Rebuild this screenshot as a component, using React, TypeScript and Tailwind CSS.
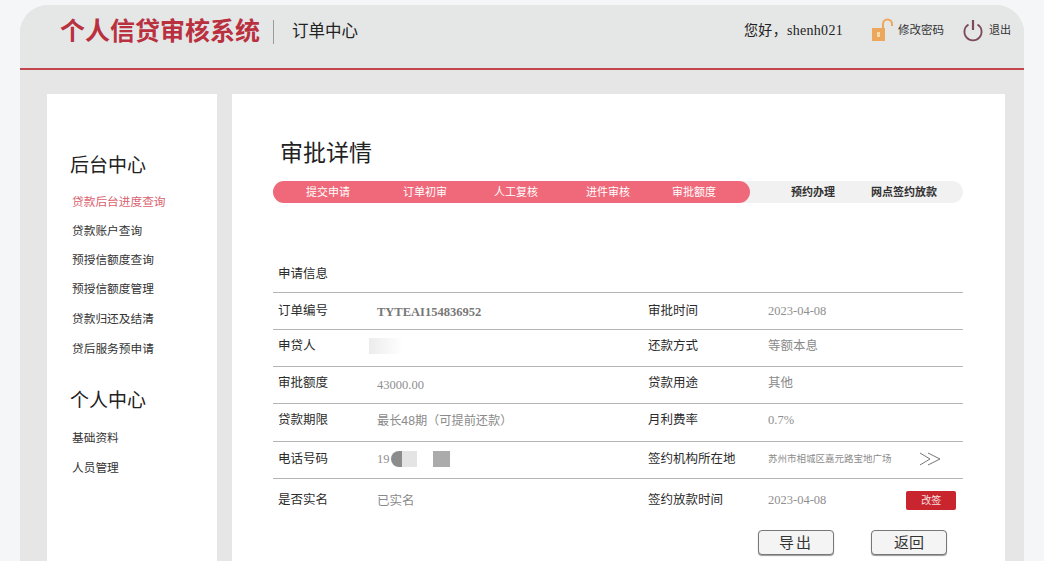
const sans = `font-['Liberation_Sans','Noto_Sans_CJK_SC',sans-serif]`;

const menuTop = ["贷款账户查询", "预授信额度查询", "预授信额度管理", "贷款归还及结清", "贷后服务预申请"];
const doneSteps = ["提交申请", "订单初审", "人工复核", "进件审核", "审批额度"];

function LockIcon() {
  return (
    <svg width="24" height="24" viewBox="0 0 24 24" className="mr-[3px] mt-[-4px]">
      <rect x="1" y="10" width="13" height="13" fill="#eda75c" />
      <rect x="6" y="14" width="3" height="5" fill="#f8d9a8" />
      <path d="M12 10V6a4.5 4.5 0 0 1 9 0V8" fill="none" stroke="#eda75c" strokeWidth="2" />
    </svg>
  );
}

function PowerIcon() {
  return (
    <svg width="22" height="24" viewBox="0 0 22 24" className="mr-[5px] mt-[-4px]">
      <path d="M6.5 6.5a8.6 8.6 0 1 0 9 0" fill="none" stroke="#7d4a5c" strokeWidth="1.8" />
      <path d="M11 2v10" stroke="#7d4a5c" strokeWidth="2.2" />
    </svg>
  );
}

function Row({ label, value, label2, value2, h, pad = "", border = true }: any) {
  return (
    <div className={`flex items-center ${h} ${pad} ${border ? "border-b border-[#b5b5b5]" : ""}`}>
      <div className="w-[104px] pl-[5px] text-[12.5px] text-[#2b2b2b]">{label}</div>
      <div className="relative w-[271px]">{value}</div>
      <div className="w-[115px] whitespace-nowrap text-[12.5px] text-[#2b2b2b]">{label2}</div>
      <div className="relative ml-[5px] flex flex-1 items-center">{value2}</div>
    </div>
  );
}

const grayText = "text-[12.5px] text-[#8a8a8a]";
const numText = `font-['Liberation_Serif','Noto_Sans_CJK_SC',serif] text-[12.5px] text-[#8f8f8f]`;

export default function App() {
  return (
    <div className={`h-[561px] w-[1044px] overflow-hidden bg-[#f5f6f8] pl-[20px] pt-[5px] ${sans}`}>
      <div className="h-[600px] w-[1004px] rounded-t-[28px] bg-[#e6e6e6]">
        <header className="flex h-[65px] items-center rounded-t-[28px] border-b-2 border-[#c2464e] bg-[#e5e6e6] pb-[10px] pl-[40px] pr-[13px]">
          <div className="text-[25px] font-bold leading-none text-[#b9313f]">个人信贷审核系统</div>
          <div className="ml-[13px] mr-[13px] h-[24px] w-px bg-[#9b9b9b]" />
          <div className="ml-[5px] text-[16.5px] text-[#222]">订单中心</div>
          <div className="ml-auto flex items-center">
            <div className="mr-[28px] mt-[-2px] font-['Liberation_Serif','Noto_Sans_CJK_SC',serif] text-[14px] tracking-[0.3px] text-[#222]">您好，shenh021</div>
            <LockIcon />
            <span className="mr-[18px] mt-[-2px] text-[11.5px] text-[#333]">修改密码</span>
            <PowerIcon />
            <span className="mt-[-2px] text-[11px] text-[#333]">退出</span>
          </div>
        </header>

        <div className="flex pl-[27px] pt-[24px]">
          <aside className="h-[480px] w-[170px] bg-white pl-[23px] pt-[59px]">
            <h2 className="text-[19px] leading-[26px] text-[#222]">后台中心</h2>
            <div className="mt-[15px] pl-[2px] text-[11.7px] leading-[16px]">
              <div className="text-[#d9626f]">贷款后台进度查询</div>
              {menuTop.map((m, i) => (
                <div key={m} className={`text-[#333] ${i >= 3 ? "mt-[14px]" : "mt-[13px]"}`}>{m}</div>
              ))}
            </div>
            <h2 className="mt-[31px] text-[19px] leading-[26px] text-[#222]">个人中心</h2>
            <div className="mt-[16px] pl-[2px] text-[11.7px] leading-[16px] text-[#333]">
              <div>基础资料</div>
              <div className="mt-[14px]">人员管理</div>
            </div>
          </aside>

          <main className="ml-[15px] h-[480px] w-[773px] bg-white pl-[41px] pr-[42px] pt-[43px]">
            <h1 className="pl-[7px] text-[23px] leading-[32px] text-[#222]">审批详情</h1>
            <div className="mt-[12px] flex h-[22px] rounded-full bg-[#f1f1f1] text-[11px]">
              <div className="flex w-[477px] items-center rounded-full bg-[#f0697a] pl-[33px] text-white">
                {doneSteps.map((s, i) => (
                  <span key={s} className={["w-[97px]", "w-[91px]", "w-[92px]", "w-[86px]", ""][i]}>{s}</span>
                ))}
              </div>
              <div className="flex items-center pl-[41px] font-bold text-[#333]">
                <span className="w-[80px]">预约办理</span>
                <span>网点签约放款</span>
              </div>
            </div>

            <div className="mt-[61px] flex h-[29px] items-start border-b border-[#b5b5b5] pl-[5px] pt-[1px] text-[12.5px] text-[#2b2b2b]">申请信息</div>
            <Row
              h="h-[37px]"
              label="订单编号"
              value={<span className="font-['Liberation_Serif',serif] text-[12.5px] font-bold text-[#777]">TYTEAI154836952</span>}
              label2="审批时间"
              value2={<span className={numText}>2023-04-08</span>}
            />
            <Row
              h="h-[37px]"
              pad="pb-[4px]"
              label="申贷人"
              value={<div className="ml-[-8px] h-[16px] w-[34px] bg-gradient-to-r from-[#ececec] to-white" />}
              label2="还款方式"
              value2={<span className={grayText}>等额本息</span>}
            />
            <Row h="h-[37px]" pad="pb-[3px]" label="审批额度" value={<span className={numText}>43000.00</span>} label2="贷款用途" value2={<span className={grayText}>其他</span>} />
            <Row h="h-[38px]" pad="pb-[5px]" label="贷款期限" value={<span className="text-[12.2px] text-[#8a8a8a]">最长48期（可提前还款）</span>} label2="月利费率" value2={<span className={numText}>0.7%</span>} />
            <Row
              h="h-[37px]"
              pad="pb-[2px]"
              label="电话号码"
              value={
                <div className="flex items-center">
                  <span className={`w-[14px] ${numText}`}>19</span>
                  <div className="h-[16px] w-[11px] rounded-l-[8px] bg-[#8c8c8c]" />
                  <div className="h-[16px] w-[15px] bg-[#e4e4e4]" />
                  <div className="h-[16px] w-[16px] bg-white" />
                  <div className="h-[16px] w-[17px] bg-[#ababab]" />
                </div>
              }
              label2="签约机构所在地"
              value2={
                <>
                  <span className="text-[9.5px] text-[#8c8c8c]">苏州市相城区嘉元路宝地广场</span>
                  <svg width="22" height="14" viewBox="0 0 22 14" className="ml-[27px]">
                    <path d="M1 1l10 6-10 6M9 1l12 6-12 6" fill="none" stroke="#666" strokeWidth="0.9" />
                  </svg>
                </>
              }
            />
            <Row
              h="h-[42px]"
              border={false}
              label="是否实名"
              value={<span className={grayText}>已实名</span>}
              label2="签约放款时间"
              value2={
                <>
                  <span className={numText}>2023-04-08</span>
                  <span className="ml-[80px] flex h-[19px] w-[50px] items-center justify-center rounded-[2px] bg-[#c9252e] text-[10px] text-white/85">改签</span>
                </>
              }
            />
            <div className="mt-[9px] flex">
              <button className="ml-[485px] h-[25px] w-[76px] rounded-[4px] border border-[#777] bg-[#f4f4f4] text-[15px] leading-none tracking-[2px] text-[#333] shadow-[0_1px_1px_#999]">导出</button>
              <button className="ml-[37px] h-[25px] w-[76px] rounded-[4px] border border-[#777] bg-[#f4f4f4] text-[15px] leading-none text-[#333] shadow-[0_1px_1px_#999]">返回</button>
            </div>
          </main>
        </div>
      </div>
    </div>
  );
}
